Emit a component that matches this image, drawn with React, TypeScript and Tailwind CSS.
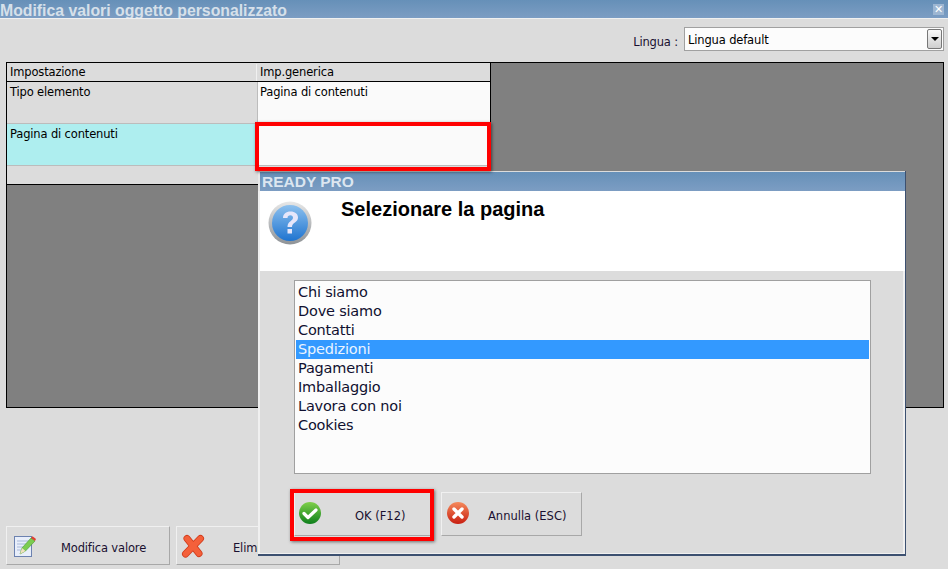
const uiFont = "font-['DejaVu_Sans',sans-serif]";
const titleFont = "font-['Liberation_Sans',sans-serif]";

const pages = ['Chi siamo', 'Dove siamo', 'Contatti', 'Spedizioni', 'Pagamenti', 'Imballaggio', 'Lavora con noi', 'Cookies'];

const raisedBorder = 'border border-b-[#a8a8a8] border-l-[#f0f0f0] border-r-[#a8a8a8] border-t-[#f0f0f0]';

function HelpIcon() {
  return (
    <svg width="44" height="44" viewBox="0 0 44 44">
      <defs>
        <linearGradient id="helpRing" x1="0" y1="0" x2="0" y2="1">
          <stop offset="0" stopColor="#e8e8e8" />
          <stop offset="1" stopColor="#8e9296" />
        </linearGradient>
        <linearGradient id="helpFill" x1="0" y1="0" x2="0" y2="1">
          <stop offset="0" stopColor="#8cc0ee" />
          <stop offset="1" stopColor="#1f74d0" />
        </linearGradient>
      </defs>
      <circle cx="22" cy="22" r="21.5" fill="url(#helpRing)" />
      <circle cx="22" cy="22" r="18" fill="url(#helpFill)" />
      <path d="M15 17c0-4 3-6.500 7.500-6.500S30 13 30 16.500c0 5-6 5-6 9.500h-4.500c0-6 5.500-6 5.500-9.300 0-1.500-1-2.400-2.600-2.400-1.800 0-2.900 1-2.900 2.700z" fill="#e6e6fa" />
      <rect x="19.500" y="28" width="4.500" height="4.500" fill="#e6e6fa" />
    </svg>
  );
}

function OkIcon() {
  return (
    <svg width="24" height="24" viewBox="0 0 24 24">
      <defs>
        <linearGradient id="okFill" x1="0" y1="0" x2="0" y2="1">
          <stop offset="0" stopColor="#7fd04a" />
          <stop offset="1" stopColor="#0e7f1c" />
        </linearGradient>
      </defs>
      <circle cx="12" cy="12" r="11" fill="url(#okFill)" />
      <path d="M6 12.500l4 4 8-7.500" fill="none" stroke="#fff" strokeWidth="3.200" strokeLinecap="round" strokeLinejoin="round" />
    </svg>
  );
}

function CancelIcon() {
  return (
    <svg width="24" height="24" viewBox="0 0 24 24">
      <defs>
        <linearGradient id="cancelFill" x1="0" y1="0" x2="0" y2="1">
          <stop offset="0" stopColor="#f58a5c" />
          <stop offset="1" stopColor="#c81e10" />
        </linearGradient>
      </defs>
      <circle cx="12" cy="12" r="11" fill="url(#cancelFill)" />
      <path d="M8 8l8 8M16 8l-8 8" fill="none" stroke="#fff" strokeWidth="3.400" strokeLinecap="round" />
    </svg>
  );
}

function EditIcon() {
  return (
    <svg width="24" height="24" viewBox="0 0 24 24">
      <rect x="1.500" y="2.500" width="17" height="20" fill="#e8eefa" stroke="#6c82b0" />
      <path d="M4 7h12M4 10h12M4 13h8M4 16h6" stroke="#a8b8d8" />
      <path d="M7 20l2-6 9-10 4 3-9.500 10z" fill="#7ccc50" stroke="#4a9a30" strokeWidth="0.600" />
      <path d="M18 4l1.500-1.800 3.500 2.800-1 2z" fill="#e04030" />
      <path d="M7 20l2-6 3.500 3z" fill="#f0e0c0" />
    </svg>
  );
}

function DeleteIcon() {
  return (
    <svg width="24" height="24" viewBox="0 0 24 24">
      <path d="M6 4.500L18 19.500M19.500 4.500L4.500 20" fill="none" stroke="#d03a1a" strokeWidth="7" strokeLinecap="round" />
      <path d="M6 4.500L18 19.500M19.500 4.500L4.500 20" fill="none" stroke="#f4603a" strokeWidth="5.400" strokeLinecap="round" />
    </svg>
  );
}

export default function App() {
  return (
    <div className={`relative h-[569px] w-[948px] overflow-hidden bg-[#dcdcdc] text-[11.500px] tracking-[-0.15px] text-black ${uiFont}`}>
      <div className="flex h-[18px] items-center justify-between overflow-hidden bg-gradient-to-b from-[#6690b8] to-[#7c9dc3] pr-[4px] tracking-normal">
        <span className={`pt-[3px] text-[15.800px] font-bold text-[#d6e0ea] ${titleFont}`}>Modifica valori oggetto personalizzato</span>
        <span className="mt-[1px] flex h-[11px] w-[11px] items-center justify-center bg-[#9db6d2] text-[11px] font-bold leading-none text-white">✕</span>
      </div>
      <div className="h-[1px] bg-[#f0f0f0]" />

      {/* riga lingua */}
      <div className="flex h-[43px] items-start justify-end gap-[6px] pr-[4px] pt-[8px]">
        <span className="pt-[7px] text-[#1a1030]">Lingua :</span>
        <div className="flex h-[24px] w-[260px] items-center justify-between border border-[#a0a0a0] bg-[#fcfcfc] pl-[3px] pr-[1px]">
          <span className="pt-[4px]">Lingua default</span>
          <div className="flex h-[20px] w-[15px] items-center justify-center rounded-[2px] border border-[#777] bg-gradient-to-b from-[#f8f8f8] to-[#cfcfcf]">
            <div className="border-x-[4px] border-t-[4px] border-x-transparent border-t-black" />
          </div>
        </div>
      </div>

      {/* griglia */}
      <div className="mx-[6px] mr-[4px] h-[346px] border border-black bg-[#808080]">
        <div className="w-[484px] border-b border-r border-black bg-[#dcdcdc]">
          <div className="flex h-[19px] items-center border-b border-black pt-[1px]">
            <div className="w-[250px] border-r border-[#f0f0f0] pl-[3px]">Impostazione</div>
            <div className="pl-[3px]">Imp.generica</div>
          </div>
          <div className="flex h-[42px] border-b border-[#bcbcbc]">
            <div className="w-[250px] pl-[3px] pt-[2px]">Tipo elemento</div>
            <div className="flex-1 border-l border-[#bcbcbc] bg-[#fafafa] pl-[2px] pt-[2px]">Pagina di contenuti</div>
          </div>
          <div className="flex h-[42px] border-b border-[#bcbcbc]">
            <div className="w-[250px] bg-[#aeeeef] pl-[3px] pt-[2px]">Pagina di contenuti</div>
            <div className="flex-1 border-l border-[#bcbcbc] bg-[#fafafa]" />
          </div>
          <div className="h-[18px]" />
        </div>
      </div>

      {/* pulsanti in basso */}
      <div className="flex gap-[6px] pl-[6px] pt-[118px]">
        <button className={`flex h-[39px] w-[164px] items-center pl-[6px] ${raisedBorder}`}>
          <EditIcon />
          <span className="ml-[24px] pt-[6px] text-[#1a1030]">Modifica valore</span>
        </button>
        <button className={`flex h-[39px] w-[164px] items-center pl-[4px] ${raisedBorder}`}>
          <DeleteIcon />
          <span className="ml-[28px] pt-[6px] text-[#1a1030]">Elimina valore</span>
        </button>
      </div>

      {/* finestra di dialogo */}
      <div className="absolute left-[258px] top-[171px] flex h-[385px] w-[648px] flex-col border-b-2 border-r border-b-[#3c5070] border-r-[#3c5070] bg-[#dcdcdc]">
        <div className="h-[1px] bg-[#dcdcdc]" />
        <div className={`flex h-[19px] items-end overflow-hidden border-l-2 border-[#e8e8e8] bg-gradient-to-b from-[#6690b8] to-[#7c9dc3] pl-[2px] text-[15.500px] font-bold leading-[18px] tracking-normal text-[#dce6f0] ${titleFont}`}>
          READY PRO
        </div>
        <div className="flex h-[80px] border-l-2 border-[#f0f0f0] bg-white">
          <div className="pl-[8px] pt-[10px]">
            <HelpIcon />
          </div>
          <div className={`pl-[29px] pt-[6px] text-[20px] font-bold leading-[24px] tracking-normal ${titleFont}`}>Selezionare la pagina</div>
        </div>
        <div className="flex flex-1 flex-col border-b border-l-2 border-r-2 border-[#f0f0f0] pl-[34px]">
          <div className="mt-[9px] h-[194px] w-[577px] border border-[#a0a0a0] bg-[#fcfcfc] px-[1px] pt-[2px] text-[14.500px] tracking-[-0.2px]">
            {pages.map((page) => (
              <div
                key={page}
                className={`h-[19px] pl-[2px] leading-[19px] ${page === 'Spedizioni' ? 'bg-[#3399ff] text-[#eaf4ff]' : 'text-[#101030]'}`}
              >
                {page}
              </div>
            ))}
          </div>
          <div className="mt-[18px] flex gap-[10px] tracking-normal">
            <button className={`flex h-[44px] w-[137px] items-start pl-[3px] pt-[8px] ${raisedBorder}`}>
              <OkIcon />
              <span className="ml-[33px] pt-[7px] text-[#1a1030]">OK (F12)</span>
            </button>
            <button className={`flex h-[44px] w-[141px] items-start pl-[4px] pt-[8px] ${raisedBorder}`}>
              <CancelIcon />
              <span className="ml-[18px] pt-[7px] text-[#1a1030]">Annulla (ESC)</span>
            </button>
          </div>
        </div>
      </div>

      {/* evidenziazioni rosse */}
      <div className="absolute left-[255px] top-[122px] h-[49px] w-[236px] border-4 border-[#ff0000] shadow-[1px_1px_3px_rgba(0,0,0,0.5)]" />
      <div className="absolute left-[290px] top-[489px] h-[52px] w-[144px] border-4 border-[#ff0000] shadow-[1px_1px_3px_rgba(0,0,0,0.5)]" />
    </div>
  );
}
